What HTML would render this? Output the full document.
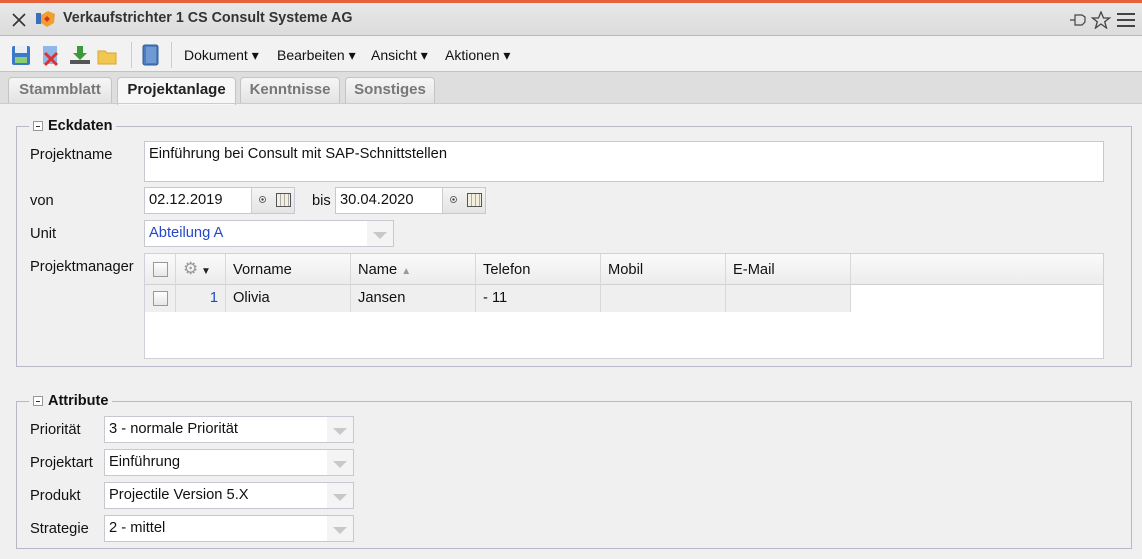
<!DOCTYPE html>
<html><head><meta charset="utf-8"><style>
*{box-sizing:border-box;margin:0;padding:0}
body{width:1142px;height:559px;overflow:hidden;background:#f0f0f0;font-family:"Liberation Sans",Tahoma,sans-serif;font-size:14.7px;color:#111;position:relative}
.abs{position:absolute}
.inp{position:absolute;background:#fff;border:1px solid #c8c8d0;padding:4px 4px;font-size:14.7px;white-space:nowrap}
.lbl{position:absolute;font-size:14.7px}
.fs{position:absolute;border:1px solid #b8b8c8}
.leg{position:absolute;background:#f0f0f0;font-weight:bold;font-size:14.5px;padding:0 4px;display:flex;align-items:center;gap:5px}
.mi{display:inline-block;width:10px;height:10px;border:1px solid #999;background:#fff;position:relative}
.mi:after{content:"";position:absolute;left:2px;top:4px;width:4px;height:1px;background:#333}
.sel .arr{position:absolute;right:6px;top:11px;width:0;height:0;border-left:7px solid transparent;border-right:7px solid transparent;border-top:7px solid #c8c8c8}
.sel .ab{position:absolute;right:0;top:0;bottom:0;width:26px;background:#f4f4f4}
.tab{position:absolute;top:77px;height:27px;border:1px solid #c4c4c4;border-bottom:none;border-radius:4px 4px 0 0;background:linear-gradient(#f6f6f6,#e2e2e2);font-weight:bold;color:#777;font-size:15px;text-align:center;line-height:24px}
.th{position:absolute;top:0;height:31px;border-right:1px solid #d8d8d8;padding:8px 7px;font-size:14.7px}
.td{position:absolute;top:31px;height:27px;border-right:1px solid #d8d8d8;padding:5px 7px;font-size:14.7px}
.cb{position:absolute;width:15px;height:15px;border:1px solid #999;background:linear-gradient(#fff,#e6e6e6)}
.dbtn{position:absolute;background:linear-gradient(#f4f4f4,#e4e4e4);border:1px solid #c8c8d0;border-left:1px solid #ccc}
</style></head><body>
<div class="abs" style="left:0;top:0;width:1142px;height:3px;background:#e4623c"></div>
<div class="abs" style="left:0;top:3px;width:1142px;height:33px;background:linear-gradient(#e8e8e8,#dcdcdc);border-bottom:1px solid #c0b8b8"></div>
<svg class="abs" style="left:11px;top:12px" width="16" height="16"><path d="M2 2L14 14M14 2L2 14" stroke="#333" stroke-width="1.6"/></svg>
<svg class="abs" style="left:35px;top:9px" width="22" height="20"><rect x="1" y="4" width="5" height="11" fill="#3a6fc0"/><path d="M6 6L13 2L20 5L19 14L12 18L6 14Z" fill="#f0a030"/><path d="M12 7L15 10L12 13L9 10Z" fill="#e03020"/></svg>
<div class="abs" style="left:63px;top:10px;font-weight:bold;font-size:14.3px;color:#333">Verkaufstrichter 1 CS Consult Systeme AG</div>
<svg class="abs" style="left:1068px;top:11px;" width="70" height="18"><path d="M2 9H7M7 4V14H14L17 11V6L14 4Z" fill="none" stroke="#444" stroke-width="1.2"/><path d="M33 1L35.5 7H41.5L36.7 10.7L38.5 17L33 13L27.5 17L29.3 10.7L24.5 7H30.5Z" fill="none" stroke="#444" stroke-width="1.3"/><path d="M49 3H67M49 9H67M49 15H67" stroke="#444" stroke-width="2"/></svg>
<div class="abs" style="left:0;top:37px;width:1142px;height:35px;background:#f2f2f2;border-bottom:1px solid #c8c0c0"></div>
<svg class="abs" style="left:10px;top:43px" width="130" height="24">
<rect x="2" y="3" width="18" height="19" rx="2" fill="#3d78c8"/><rect x="5" y="3" width="12" height="7" fill="#e8eef8"/><rect x="5" y="14" width="12" height="6" fill="#8bd070"/>
<rect x="33" y="3" width="14" height="18" fill="#8fb8e8"/><path d="M35 10L47 22M47 10L35 22" stroke="#e03030" stroke-width="3"/>
<path d="M67 3h6v7h4l-7 7l-7-7h4z" fill="#3a9a3a"/><rect x="60" y="17" width="20" height="4" fill="#555"/>
<path d="M88 8h7l2 2h9v11h-18z" fill="#f0c850" stroke="#d8a830"/>
</svg>
<div class="abs" style="left:131px;top:42px;width:1px;height:26px;background:#ccc"></div>
<div class="abs" style="left:171px;top:42px;width:1px;height:26px;background:#ccc"></div>
<svg class="abs" style="left:142px;top:44px" width="18" height="22"><rect x="1" y="1" width="15" height="20" rx="2" fill="#4c7dc0" stroke="#2d5a98"/><rect x="4" y="3" width="10" height="16" fill="#6f9ad4"/></svg>
<div class="abs" style="left:184px;top:47px;font-size:14px">Dokument ▾</div>
<div class="abs" style="left:277px;top:47px;font-size:14px">Bearbeiten ▾</div>
<div class="abs" style="left:371px;top:47px;font-size:14px">Ansicht ▾</div>
<div class="abs" style="left:445px;top:47px;font-size:14px">Aktionen ▾</div>
<div class="abs" style="left:0;top:72px;width:1142px;height:32px;background:#dedede"></div>
<div class="tab" style="left:8px;width:104px">Stammblatt</div>
<div class="tab" style="left:117px;width:119px;background:#f7f7f7;color:#222;height:28px">Projektanlage</div>
<div class="tab" style="left:240px;width:100px">Kenntnisse</div>
<div class="tab" style="left:345px;width:90px">Sonstiges</div>
<div class="abs" style="left:0;top:103px;width:1142px;height:1px;background:#ccc"></div>

<div class="fs" style="left:16px;top:126px;width:1116px;height:241px"></div>
<div class="leg" style="left:29px;top:118px"><span class="mi"></span>Eckdaten</div>
<div class="lbl" style="left:30px;top:147px">Projektname</div>
<div class="inp" style="left:144px;top:141px;width:960px;height:41px">Einführung bei Consult mit SAP-Schnittstellen</div>
<div class="lbl" style="left:30px;top:193px">von</div>
<div class="inp" style="left:144px;top:187px;width:108px;height:27px">02.12.2019</div>
<div class="dbtn" style="left:251px;top:187px;width:44px;height:27px"></div>
<div class="abs" style="left:259px;top:196px;width:7px;height:7px;border-radius:50%;border:1px solid #666;background:radial-gradient(#444 30%,#fff 40%)"></div>
<div class="abs" style="left:276px;top:193px;width:15px;height:14px;border:1px solid #555;background:repeating-linear-gradient(90deg,#f4f0e0 0 3px,#aaa 3px 4px)"></div>
<div class="lbl" style="left:312px;top:193px">bis</div>
<div class="inp" style="left:335px;top:187px;width:108px;height:27px">30.04.2020</div>
<div class="dbtn" style="left:442px;top:187px;width:44px;height:27px"></div>
<div class="abs" style="left:450px;top:196px;width:7px;height:7px;border-radius:50%;border:1px solid #666;background:radial-gradient(#444 30%,#fff 40%)"></div>
<div class="abs" style="left:467px;top:193px;width:15px;height:14px;border:1px solid #555;background:repeating-linear-gradient(90deg,#f4f0e0 0 3px,#aaa 3px 4px)"></div>
<div class="lbl" style="left:30px;top:226px">Unit</div>
<div class="inp sel" style="left:144px;top:220px;width:250px;height:27px;color:#2448c8">Abteilung A<span class="ab"></span><span class="arr"></span></div>
<div class="lbl" style="left:30px;top:259px">Projektmanager</div>
<div class="abs" style="left:144px;top:253px;width:960px;height:106px;background:#fff;border:1px solid #d0d0d8">
 <div class="abs" style="left:0;top:0;width:958px;height:31px;background:linear-gradient(#fafafa,#ececec);border-bottom:1px solid #d0d0d0"></div>
 <div class="th" style="left:0;width:31px"></div><div class="cb" style="left:8px;top:8px"></div>
 <div class="th" style="left:31px;width:50px;color:#999;font-size:17px;padding-top:5px">⚙<span style="color:#222;font-size:10px"> ▼</span></div>
 <div class="th" style="left:81px;width:125px">Vorname</div>
 <div class="th" style="left:206px;width:125px">Name <span style="color:#999;font-size:10px">▲</span></div>
 <div class="th" style="left:331px;width:125px">Telefon</div>
 <div class="th" style="left:456px;width:125px">Mobil</div>
 <div class="th" style="left:581px;width:125px">E-Mail</div>
 <div class="abs" style="left:0;top:31px;width:706px;height:27px;background:#efefef"></div>
 <div class="td" style="left:0;width:31px"></div><div class="cb" style="left:8px;top:37px"></div>
 <div class="td" style="left:31px;width:50px;text-align:right;color:#2448c8">1</div>
 <div class="td" style="left:81px;width:125px">Olivia</div>
 <div class="td" style="left:206px;width:125px">Jansen</div>
 <div class="td" style="left:331px;width:125px">- 11</div>
 <div class="td" style="left:456px;width:125px"></div>
 <div class="td" style="left:581px;width:125px"></div>
</div>

<div class="fs" style="left:16px;top:401px;width:1116px;height:148px"></div>
<div class="leg" style="left:29px;top:393px"><span class="mi"></span>Attribute</div>
<div class="lbl" style="left:30px;top:422px">Priorität</div>
<div class="inp sel" style="left:104px;top:416px;width:250px;height:27px">3 - normale Priorität<span class="ab"></span><span class="arr"></span></div>
<div class="lbl" style="left:30px;top:455px">Projektart</div>
<div class="inp sel" style="left:104px;top:449px;width:250px;height:27px">Einführung<span class="ab"></span><span class="arr"></span></div>
<div class="lbl" style="left:30px;top:488px">Produkt</div>
<div class="inp sel" style="left:104px;top:482px;width:250px;height:27px">Projectile Version 5.X<span class="ab"></span><span class="arr"></span></div>
<div class="lbl" style="left:30px;top:521px">Strategie</div>
<div class="inp sel" style="left:104px;top:515px;width:250px;height:27px">2 - mittel<span class="ab"></span><span class="arr"></span></div>
</body></html>
